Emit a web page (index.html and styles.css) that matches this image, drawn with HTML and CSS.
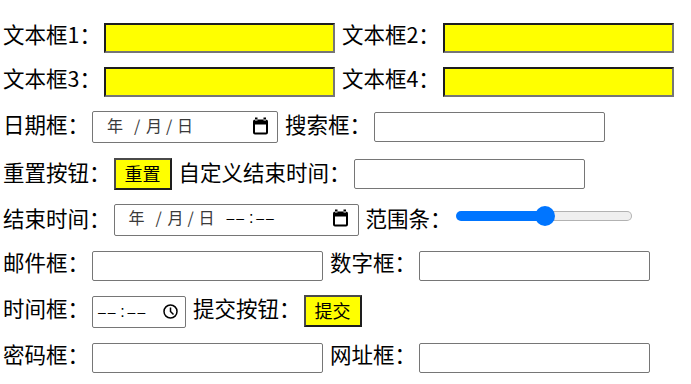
FILE: index.html
```html
<!DOCTYPE html>
<html lang="zh-CN">
<head>
<meta charset="utf-8">
<title>表单</title>
<link rel="stylesheet" href="styles.css">
</head>
<body>
<form class="form">
  <div class="row short">
    <label class="lbl num">文本框1：</label><input class="ctl txt yellow" type="text">
    <label class="lbl num">文本框2：</label><input class="ctl txt yellow" type="text">
  </div>
  <div class="row short">
    <label class="lbl num">文本框3：</label><input class="ctl txt yellow" type="text">
    <label class="lbl num">文本框4：</label><input class="ctl txt yellow" type="text">
  </div>
  <div class="row r3">
    <label class="lbl">日期框：</label>
    <div class="ctl date">
      <span class="df dy">年</span><span class="df ds">/</span><span class="df dm">月</span><span class="df ds ds2">/</span><span class="df dd">日</span>
      <svg class="cal" viewBox="0 0 17 18" width="17" height="18"><path fill-rule="evenodd" d="M3 2.5H14A2 2 0 0 1 16 4.5V15.5A2 2 0 0 1 14 17.5H3A2 2 0 0 1 1 15.5V4.5A2 2 0 0 1 3 2.5ZM3 7.5V15.5H14V7.5ZM3 0.5H5.5V3.5H3ZM11.5 0.5H14V3.5H11.5Z"/></svg>
    </div>
    <label class="lbl">搜索框：</label><input class="ctl txt" type="search">
  </div>
  <div class="row mid">
    <label class="lbl">重置按钮：</label><button class="ctl btn" type="reset">重置</button>
    <label class="lbl">自定义结束时间：</label><input class="ctl txt" type="text">
  </div>
  <div class="row mid">
    <label class="lbl">结束时间：</label>
    <div class="ctl date datetime">
      <span class="df dy">年</span><span class="df ds">/</span><span class="df dm">月</span><span class="df ds ds2">/</span><span class="df dd">日</span>
      <span class="tf tdash tfirst">––</span><span class="tf tcolon">:</span><span class="tf tdash">––</span>
      <svg class="cal" viewBox="0 0 17 18" width="17" height="18"><path fill-rule="evenodd" d="M3 2.5H14A2 2 0 0 1 16 4.5V15.5A2 2 0 0 1 14 17.5H3A2 2 0 0 1 1 15.5V4.5A2 2 0 0 1 3 2.5ZM3 7.5V15.5H14V7.5ZM3 0.5H5.5V3.5H3ZM11.5 0.5H14V3.5H11.5Z"/></svg>
    </div>
    <label class="lbl">范围条：</label>
    <div class="range">
      <div class="range-fill"></div><div class="range-rest"></div>
      <div class="range-thumb"></div>
    </div>
  </div>
  <div class="row">
    <label class="lbl">邮件框：</label><input class="ctl txt" type="email">
    <label class="lbl">数字框：</label><input class="ctl txt" type="number">
  </div>
  <div class="row">
    <label class="lbl">时间框：</label>
    <div class="ctl time">
      <span class="tf tdash">––</span><span class="tf tcolon">:</span><span class="tf tdash">––</span>
      <svg class="clock" viewBox="0 0 15 15" width="15" height="15"><circle cx="7.5" cy="7.5" r="6.5" fill="none" stroke="#000" stroke-width="1.5"/><path d="M7.5 3.5V7.5L10.5 10.5" fill="none" stroke="#000" stroke-width="1.5"/></svg>
    </div>
    <label class="lbl">提交按钮：</label><button class="ctl btn btn-up" type="submit">提交</button>
  </div>
  <div class="row">
    <label class="lbl">密码框：</label><input class="ctl txt" type="password">
    <label class="lbl">网址框：</label><input class="ctl txt" type="url">
  </div>
</form>
</body>
</html>
```

FILE: styles.css
```css
* {
  box-sizing: border-box;
}

body {
  margin: 0;
  background: #fff;
  color: #000;
  font-family: "Noto Sans CJK SC", "Noto Sans", sans-serif;
}

.form {
  display: flex;
  flex-direction: column;
  padding: 15.5px 0 0 3px;
}

.row {
  display: flex;
  align-items: center;
  height: 46px;
}

.row.short {
  height: 44px;
}

.row.r3 {
  height: 47px;
}

.lbl {
  font-size: 21.5px;
  line-height: 30px;
  padding-bottom: 7px;
  margin-right: 3px;
  white-space: nowrap;
  flex: none;
}

.lbl.num {
  margin-right: 3px;
}

.row.mid .lbl {
  padding-bottom: 3px;
}

.ctl {
  margin: 0 7px 0 0;
  flex: none;
}

.txt {
  width: 231px;
  height: 30px;
  padding: 1px 2px;
  border: 1px solid #767676;
  border-radius: 2px;
  background: #fff;
  font: 16px "Noto Sans CJK SC", sans-serif;
}

.txt.yellow {
  background: #ff0;
  border-width: 2px;
  border-style: solid;
  border-color: #1e1e1e #767676 #767676 #1e1e1e;
  border-radius: 0;
}

.btn {
  width: 58px;
  height: 32px;
  padding: 0 0 2px;
  background: #ff0;
  border: 2px solid;
  border-color: #4a4a4a #1e1e1e #1e1e1e #4a4a4a;
  border-radius: 0;
  color: #000;
  font: 18px "Noto Sans CJK SC", sans-serif;
}

.btn-up {
  margin-bottom: 2px;
}

/* date / datetime fields */
.date {
  display: flex;
  align-items: center;
  width: 186px;
  height: 32px;
  padding: 0 8px 3px 14px;
  border: 1px solid #767676;
  border-radius: 2px;
  background: #fff;
  color: #3a3a3a;
  font: 16px "Noto Sans CJK SC", sans-serif;
}

.datetime {
  width: 245px;
  padding-right: 9px;
}

.df {
  padding-bottom: 2px;
  line-height: 22px;
}

.dy {
  width: 16px;
  margin-right: 10px;
}

.ds {
  width: 8px;
  text-align: center;
}

.dm {
  margin-left: 5px;
}

.ds2 {
  margin-left: 3px;
}

.dd {
  margin-left: 4px;
}

.cal {
  margin-left: auto;
  flex: none;
  fill: #000;
}

/* time field */
.time {
  display: flex;
  align-items: center;
  width: 94px;
  height: 32px;
  padding: 0 7px 0 5px;
  border: 1px solid #767676;
  border-radius: 2px;
  background: #fff;
  color: #000;
}

.tf {
  font: 14px "Liberation Sans", sans-serif;
  line-height: 22px;
  color: #000;
}

.tdash {
  letter-spacing: 2px;
}

.tfirst {
  margin-left: 12px;
}

.tcolon {
  width: 10px;
  text-align: center;
  font-size: 16px;
}

.clock {
  margin-left: auto;
  flex: none;
}

/* range slider */
.range {
  position: relative;
  display: flex;
  align-items: center;
  width: 176px;
  height: 20px;
  margin: 0 0 8px 1px;
  flex: none;
}

.range-fill {
  width: 89px;
  height: 10px;
  background: #0075ff;
  border-radius: 5px 0 0 5px;
}

.range-rest {
  flex: 1;
  height: 10px;
  background: #efefef;
  border: 1px solid #b2b2b2;
  border-left: none;
  border-radius: 0 5px 5px 0;
}

.range-thumb {
  position: absolute;
  left: 79px;
  top: 0;
  width: 20px;
  height: 20px;
  border-radius: 50%;
  background: #0075ff;
}
```
